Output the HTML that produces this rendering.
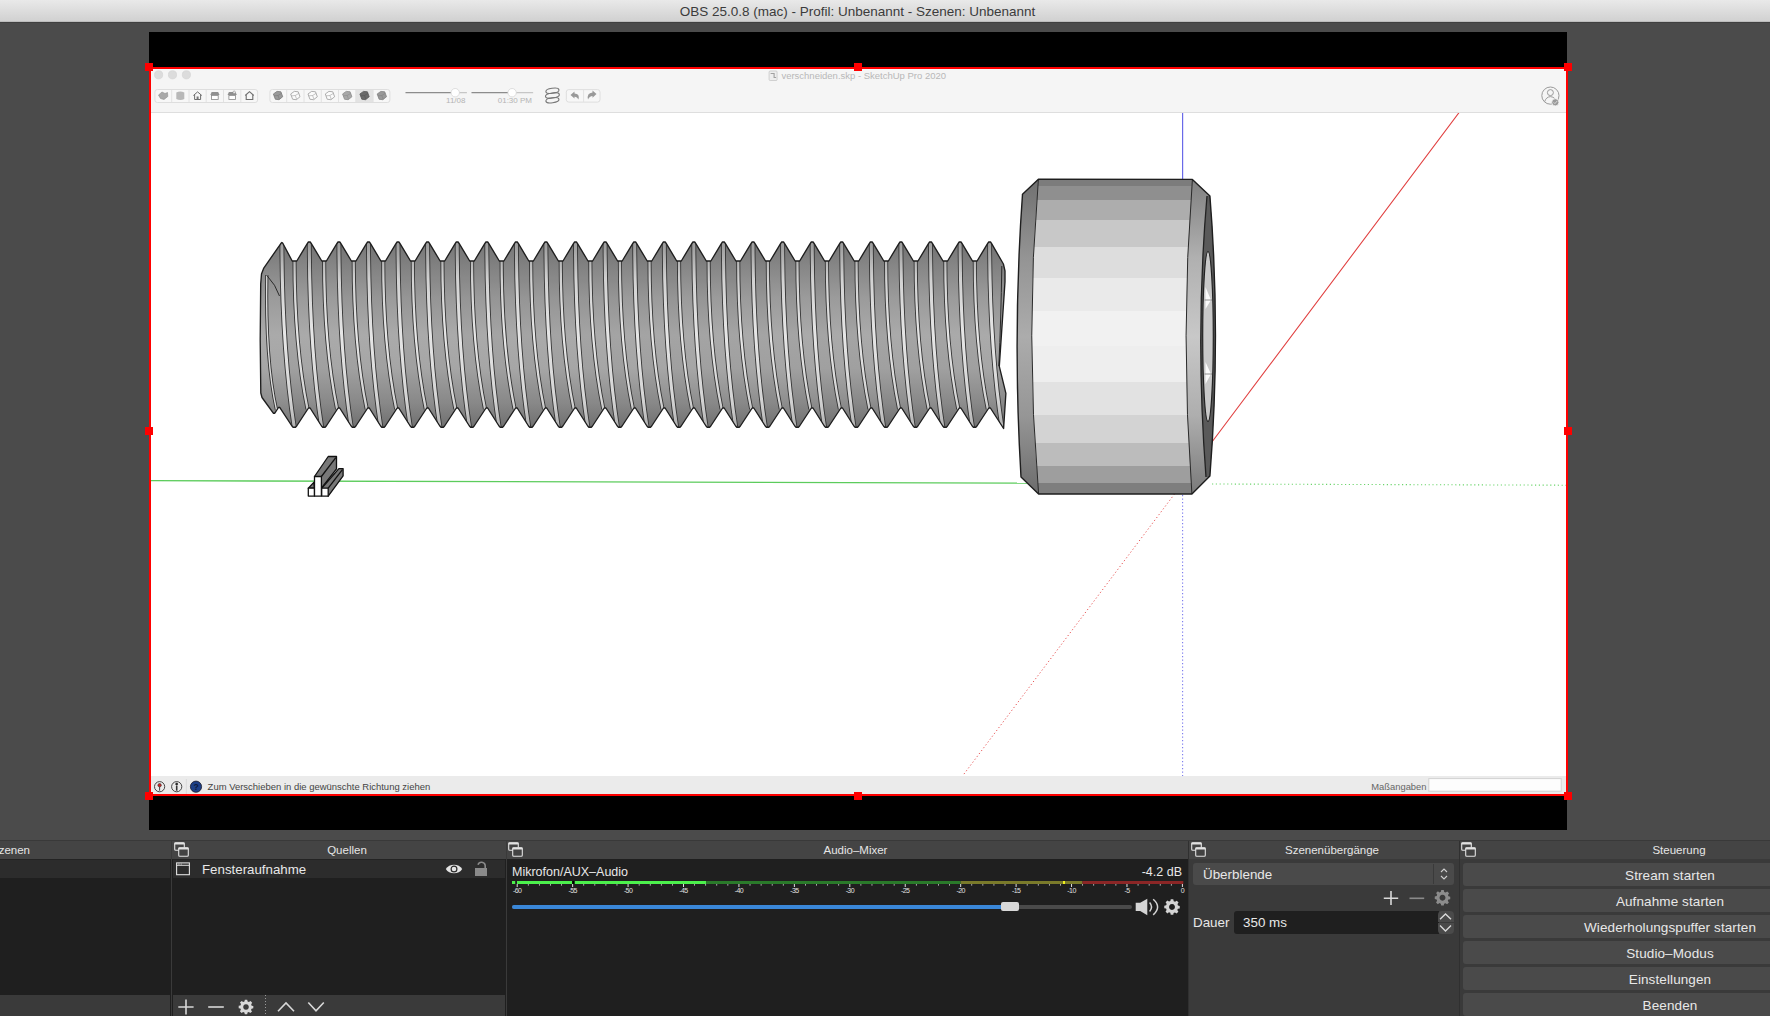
<!DOCTYPE html>
<html><head><meta charset="utf-8">
<style>
*{margin:0;padding:0;box-sizing:border-box}
html,body{width:1770px;height:1016px;overflow:hidden;background:#4b4b4b;font-family:"Liberation Sans",sans-serif}
.a{position:absolute}
#title{left:0;top:0;width:1770px;height:22px;background:linear-gradient(#e9e9e9,#d1d1d1);border-bottom:1px solid #bdbdbd}
#title span{position:absolute;left:0;width:1715px;top:3.5px;text-align:center;font-size:13.5px;color:#3b3b3b;letter-spacing:0px}
#tline{left:0;top:22px;width:1770px;height:1px;background:#404040}
#preview{left:149px;top:32px;width:1418px;height:798px;background:#000}
#su{left:151px;top:69px;width:1415px;height:725px;background:#fff;overflow:hidden}
#sutop{left:0;top:0;width:1415px;height:44px;background:#f5f5f5;border-bottom:1px solid #dedede}
#sustat{left:0;top:707px;width:1415px;height:18px;background:#ebebeb}
.red{background:#ff0000}
.h{width:8px;height:8px;background:#ff0000}
#dock{left:0;top:840px;width:1770px;height:176px;background:#1f1f1f}
.hdr{top:841px;height:18px;background:#444444;color:#e6e6e6;font-size:11.5px;text-align:center;line-height:18px}
.btn{left:1463px;width:414px;height:23px;background:#4a4a4a;border-radius:3px;color:#e8e8e8;font-size:13.5px;letter-spacing:0.1px;line-height:25px;text-align:center}
</style></head><body>
<div id="title" class="a"><span>OBS 25.0.8 (mac) - Profil: Unbenannt - Szenen: Unbenannt</span></div>
<div id="tline" class="a"></div>
<div id="preview" class="a"></div>
<div id="su" class="a">
  <div id="sutop" class="a"></div>
  <div id="sustat" class="a"></div>
</div>
<!--TB--><svg class="a" style="left:0;top:0;width:1770px;height:1016px" viewBox="0 0 1770 1016"><rect x="154.9" y="89.5" width="102.7" height="13" rx="2.5" fill="#f7f7f7" stroke="#dedede" stroke-width="1"/>
<line x1="171.7" y1="90" x2="171.7" y2="102" stroke="#e2e2e2" stroke-width="1"/>
<line x1="189.0" y1="90" x2="189.0" y2="102" stroke="#e2e2e2" stroke-width="1"/>
<line x1="206.2" y1="90" x2="206.2" y2="102" stroke="#e2e2e2" stroke-width="1"/>
<line x1="223.5" y1="90" x2="223.5" y2="102" stroke="#e2e2e2" stroke-width="1"/>
<line x1="240.8" y1="90" x2="240.8" y2="102" stroke="#e2e2e2" stroke-width="1"/>
<g transform="translate(163.0,95.5)"><path d="M-4.5,-0.5 L-1,-3.5 L2,-2 L4.5,-3 L4.8,1 L1,4 L-2.5,3 Z" fill="#a8a8a8" stroke="#8e8e8e" stroke-width="0.6"/></g>
<g transform="translate(180.3,95.5)"><path d="M-4,-3 Q0,-5 4,-3 L4,3.5 Q0,5.5 -4,3.5 Z" fill="#b8b8b8"/></g>
<g transform="translate(197.6,95.5)" fill="none" stroke="#6e6e6e" stroke-width="1"><path d="M-4.2,0 L0,-3.6 L4.2,0 M-3,-0.8 V4 H3 V-0.8"/><rect x="-1" y="1" width="2" height="3" fill="#777" stroke="none"/></g>
<g transform="translate(214.9,95.5)"><path d="M-4.6,-0.5 L-3.3,-3.4 H3.3 L4.6,-0.5 Z" fill="#909090"/><rect x="-3.3" y="0" width="6.6" height="4" fill="#fff" stroke="#888" stroke-width="0.8"/></g>
<g transform="translate(232.2,95.5)"><path d="M-4.6,-0.5 L-3.3,-3.4 H3.3 L4.6,-0.5 Z" fill="#909090"/><circle cx="2" cy="-3.3" r="1.2" fill="#fff" stroke="#888" stroke-width="0.6"/><rect x="-3.3" y="0" width="6.6" height="4" fill="#fff" stroke="#888" stroke-width="0.8"/></g>
<g transform="translate(249.5,95.5)" fill="none" stroke="#6e6e6e" stroke-width="1.1"><path d="M-4.3,0 L0,-3.8 L4.3,0 M-3.3,-0.9 V4 H3.3 V-0.9"/></g>
<rect x="269.9" y="89.5" width="120.0" height="13" rx="2.5" fill="#f7f7f7" stroke="#dedede" stroke-width="1"/>
<rect x="355.8" y="90" width="17.3" height="12" fill="#e3e3e3"/>
<line x1="286.7" y1="90" x2="286.7" y2="102" stroke="#e2e2e2" stroke-width="1"/>
<line x1="304.0" y1="90" x2="304.0" y2="102" stroke="#e2e2e2" stroke-width="1"/>
<line x1="321.3" y1="90" x2="321.3" y2="102" stroke="#e2e2e2" stroke-width="1"/>
<line x1="338.5" y1="90" x2="338.5" y2="102" stroke="#e2e2e2" stroke-width="1"/>
<line x1="355.8" y1="90" x2="355.8" y2="102" stroke="#e2e2e2" stroke-width="1"/>
<line x1="373.1" y1="90" x2="373.1" y2="102" stroke="#e2e2e2" stroke-width="1"/>
<g transform="translate(278.0,95.5) rotate(-20)"><path d="M-3.8,-3 L0.5,-4.2 L4,-2.5 L4,2.8 L-0.5,4.3 L-3.8,2.6 Z" fill="#9a9a9a" stroke="#777" stroke-width="0.7"/><path d="M-3.8,-1 L0,0 L4,-0.8 M0,0 V4" fill="none" stroke="#777" stroke-width="0.5"/></g>
<g transform="translate(295.3,95.5) rotate(-20)"><path d="M-3.8,-3 L0.5,-4.2 L4,-2.5 L4,2.8 L-0.5,4.3 L-3.8,2.6 Z" fill="#fbfbfb" stroke="#999" stroke-width="0.7"/><path d="M-3.8,-1 L0,0 L4,-0.8 M0,0 V4" fill="none" stroke="#999" stroke-width="0.5"/></g>
<g transform="translate(312.6,95.5) rotate(-20)"><path d="M-3.8,-3 L0.5,-4.2 L4,-2.5 L4,2.8 L-0.5,4.3 L-3.8,2.6 Z" fill="#fbfbfb" stroke="#999" stroke-width="0.7"/><path d="M-3.8,-1 L0,0 L4,-0.8 M0,0 V4" fill="none" stroke="#999" stroke-width="0.5"/></g>
<g transform="translate(329.9,95.5) rotate(-20)"><path d="M-3.8,-3 L0.5,-4.2 L4,-2.5 L4,2.8 L-0.5,4.3 L-3.8,2.6 Z" fill="#fbfbfb" stroke="#999" stroke-width="0.7"/><path d="M-3.8,-1 L0,0 L4,-0.8 M0,0 V4" fill="none" stroke="#999" stroke-width="0.5"/></g>
<g transform="translate(347.2,95.5) rotate(-20)"><path d="M-3.8,-3 L0.5,-4.2 L4,-2.5 L4,2.8 L-0.5,4.3 L-3.8,2.6 Z" fill="#a8a8a8" stroke="#8a8a8a" stroke-width="0.7"/><path d="M-3.8,-1 L0,0 L4,-0.8 M0,0 V4" fill="none" stroke="#8a8a8a" stroke-width="0.5"/></g>
<g transform="translate(364.5,95.5) rotate(-20)"><path d="M-3.8,-3 L0.5,-4.2 L4,-2.5 L4,2.8 L-0.5,4.3 L-3.8,2.6 Z" fill="#6a6a6a" stroke="#555" stroke-width="0.7"/><path d="M-3.8,-1 L0,0 L4,-0.8 M0,0 V4" fill="none" stroke="#555" stroke-width="0.5"/></g>
<g transform="translate(381.8,95.5) rotate(-20)"><path d="M-3.8,-3 L0.5,-4.2 L4,-2.5 L4,2.8 L-0.5,4.3 L-3.8,2.6 Z" fill="#999" stroke="#808080" stroke-width="0.7"/><path d="M-3.8,-1 L0,0 L4,-0.8 M0,0 V4" fill="none" stroke="#808080" stroke-width="0.5"/></g>
<line x1="406" y1="92.7" x2="455" y2="92.7" stroke="#8c8c8c" stroke-width="1.3" stroke-linecap="round"/>
<line x1="455" y1="92.7" x2="466.4" y2="92.7" stroke="#c6c6c6" stroke-width="1.3" stroke-linecap="round"/>
<circle cx="455.2" cy="92.7" r="4.2" fill="#fff" stroke="#d6d6d6" stroke-width="0.8"/>
<line x1="472" y1="92.7" x2="512" y2="92.7" stroke="#8c8c8c" stroke-width="1.3" stroke-linecap="round"/>
<line x1="512" y1="92.7" x2="532.6" y2="92.7" stroke="#c6c6c6" stroke-width="1.3" stroke-linecap="round"/>
<circle cx="512.1" cy="92.7" r="4.2" fill="#fff" stroke="#d6d6d6" stroke-width="0.8"/>
<text x="465.5" y="103.3" font-size="8" text-anchor="end" fill="#b4b4b4" font-family="Liberation Sans">11/08</text>
<text x="532" y="103.3" font-size="8" text-anchor="end" fill="#b4b4b4" font-family="Liberation Sans">01:30 PM</text>
<g fill="none" stroke="#777" stroke-width="1.1"><ellipse cx="552.4" cy="90.8" rx="6.6" ry="2.5" transform="rotate(-8 552.4 90.8)"/><ellipse cx="552.4" cy="95.5" rx="7" ry="2.6" transform="rotate(-8 552.4 95.5)"/><ellipse cx="552.4" cy="100.2" rx="6.6" ry="2.5" transform="rotate(-8 552.4 100.2)"/></g>
<rect x="566.3" y="89.6" width="33.7" height="12.5" rx="2.5" fill="#f7f7f7" stroke="#dedede" stroke-width="1"/>
<line x1="583.6" y1="90" x2="583.6" y2="102" stroke="#e2e2e2"/>
<path d="M570.5,95 L574.5,91.5 L574.5,93.5 Q580,93.5 578.5,99.5 Q577,96.5 574.5,96.8 L574.5,98.6 Z" fill="#999"/>
<path d="M596.5,94 L592.5,90.5 L592.5,92.5 Q586.5,93 588,99.5 Q589.5,96 592.5,96 L592.5,97.8 Z" fill="#999"/>
<circle cx="158.6" cy="74.8" r="4.1" fill="#dcdcdc" stroke="#d2d2d2" stroke-width="0.6"/>
<circle cx="172.5" cy="74.8" r="4.1" fill="#dcdcdc" stroke="#d2d2d2" stroke-width="0.6"/>
<circle cx="186.4" cy="74.8" r="4.1" fill="#dcdcdc" stroke="#d2d2d2" stroke-width="0.6"/>
<g transform="translate(768.6,70.5)"><rect x="0.5" y="0.5" width="8" height="9.5" rx="1" fill="#eee" stroke="#c8c8c8" stroke-width="0.8"/><path d="M2,3 L5.5,3 L5.5,7 L7.5,7" fill="none" stroke="#a0a0a0" stroke-width="1.1"/></g>
<text x="781.4" y="78.6" font-size="9.6" fill="#b8b8b8" font-family="Liberation Sans" textLength="164.7" lengthAdjust="spacingAndGlyphs">verschneiden.skp - SketchUp Pro 2020</text>
<g fill="none" stroke="#9a9a9a" stroke-width="1"><circle cx="1550.4" cy="95.6" r="8.6"/><circle cx="1550.4" cy="92.6" r="3"/><path d="M1544.6,101.8 Q1546,97 1550.4,96.6 Q1553.2,96.8 1554.8,98.6"/></g>
<circle cx="1555.3" cy="102.3" r="3.6" fill="#9a9a9a" stroke="#f5f5f5" stroke-width="0.8"/>
<path d="M1553.6,102.3 L1554.9,103.6 L1557.2,101" fill="none" stroke="#e8e8e8" stroke-width="0.8"/>
<g transform="translate(159.6,786.7)" fill="none" stroke="#333" stroke-width="0.9"><circle r="5.1"/><circle cy="-1.5" r="1.7" fill="#c22" stroke="#333" stroke-width="0.6"/><line x1="0" y1="0.3" x2="0" y2="4"/></g>
<g transform="translate(176.7,786.7)" fill="none" stroke="#333" stroke-width="0.9"><circle r="5.1"/><circle cy="-2.6" r="1" fill="#111"/><path d="M0,-1 V4" stroke-width="1.6"/></g>
<line x1="186.3" y1="779" x2="186.3" y2="794" stroke="#dadada"/>
<circle cx="196" cy="786.7" r="5.6" fill="#1d3f86" stroke="#1a1a2a" stroke-width="0.8"/>
<text x="196" y="790.2" font-size="8.6" font-weight="bold" text-anchor="middle" fill="#0d1a3a" font-family="Liberation Sans">?</text>
<text x="207.6" y="789.6" font-size="9.4" fill="#444" font-family="Liberation Sans" textLength="222.6" lengthAdjust="spacingAndGlyphs">Zum Verschieben in die gewünschte Richtung ziehen</text>
<text x="1426.5" y="789.6" font-size="9.4" text-anchor="end" fill="#666" font-family="Liberation Sans">Maßangaben</text>
<rect x="1428.8" y="778.6" width="132.4" height="12.6" fill="#fdfdfd" stroke="#d2d2d2" stroke-width="1"/></svg><!--/TB-->
<!--VP--><svg class="a" style="left:0;top:0;width:1770px;height:1016px" viewBox="0 0 1770 1016">
<defs><clipPath id="vp"><rect x="151" y="113" width="1415" height="663"/></clipPath></defs>
<g clip-path="url(#vp)">

<line x1="151" y1="480.7" x2="1027" y2="483.1" stroke="#5ccc5c" stroke-width="1.3"/>
<line x1="1212" y1="484" x2="1566" y2="485.2" stroke="#6cd46c" stroke-width="1.1" stroke-dasharray="1.2,2.6"/>
<line x1="1182.6" y1="113" x2="1182.6" y2="180" stroke="#6a6ae8" stroke-width="1.2"/>
<line x1="1182.6" y1="495" x2="1182.6" y2="776" stroke="#7a7aee" stroke-width="1.1" stroke-dasharray="1.2,2.3"/>
<line x1="1459.3" y1="112.2" x2="1212.5" y2="441.3" stroke="#e03c3c" stroke-width="1.05"/>
<line x1="1174.5" y1="494" x2="961" y2="778" stroke="#e85050" stroke-width="1" stroke-dasharray="1.2,2.4"/>

<defs>
<linearGradient id="tg" x1="0" y1="242" x2="0" y2="428" gradientUnits="userSpaceOnUse"><stop offset="0" stop-color="#767676"/><stop offset="0.12" stop-color="#858585"/><stop offset="0.3" stop-color="#9b9b9b"/><stop offset="0.5" stop-color="#aaaaaa"/><stop offset="0.68" stop-color="#a6a6a6"/><stop offset="0.85" stop-color="#909090"/><stop offset="1" stop-color="#747474"/></linearGradient>
<linearGradient id="bg" x1="0" y1="242" x2="0" y2="428" gradientUnits="userSpaceOnUse"><stop offset="0" stop-color="#9a9a9a"/><stop offset="0.1" stop-color="#b4b4b4"/><stop offset="0.2" stop-color="#d2d2d2"/><stop offset="0.5" stop-color="#e6e6e6"/><stop offset="0.85" stop-color="#d4d4d4"/><stop offset="1" stop-color="#b0b0b0"/></linearGradient>
<clipPath id="tc"><path d="M260.7,284.0 L261.5,274.0 L263.6,268.4 L281.0,243.3 L281.9,242.5 L282.8,243.3 L292.2,261.0 L296.8,261.0 L307.4,243.4 L308.4,242.0 L310.2,242.0 L311.2,243.4 L321.8,261.0 L326.4,261.0 L337.0,243.4 L338.0,242.0 L339.8,242.0 L340.8,243.4 L351.4,261.0 L356.0,261.0 L366.6,243.4 L367.6,242.0 L369.4,242.0 L370.4,243.4 L380.9,261.0 L385.5,261.0 L396.1,243.4 L397.1,242.0 L398.9,242.0 L399.9,243.4 L410.5,261.0 L415.1,261.0 L425.7,243.4 L426.7,242.0 L428.5,242.0 L429.5,243.4 L440.1,261.0 L444.7,261.0 L455.3,243.4 L456.3,242.0 L458.1,242.0 L459.1,243.4 L469.7,261.0 L474.3,261.0 L484.9,243.4 L485.9,242.0 L487.7,242.0 L488.7,243.4 L499.3,261.0 L503.9,261.0 L514.5,243.4 L515.5,242.0 L517.3,242.0 L518.3,243.4 L528.8,261.0 L533.4,261.0 L544.0,243.4 L545.0,242.0 L546.8,242.0 L547.8,243.4 L558.4,261.0 L563.0,261.0 L573.6,243.4 L574.6,242.0 L576.4,242.0 L577.4,243.4 L588.0,261.0 L592.6,261.0 L603.2,243.4 L604.2,242.0 L606.0,242.0 L607.0,243.4 L617.6,261.0 L622.2,261.0 L632.8,243.4 L633.8,242.0 L635.6,242.0 L636.6,243.4 L647.2,261.0 L651.8,261.0 L662.4,243.4 L663.4,242.0 L665.2,242.0 L666.2,243.4 L676.7,261.0 L681.3,261.0 L691.9,243.4 L692.9,242.0 L694.7,242.0 L695.7,243.4 L706.3,261.0 L710.9,261.0 L721.5,243.4 L722.5,242.0 L724.3,242.0 L725.3,243.4 L735.9,261.0 L740.5,261.0 L751.1,243.4 L752.1,242.0 L753.9,242.0 L754.9,243.4 L765.5,261.0 L770.1,261.0 L780.7,243.4 L781.7,242.0 L783.5,242.0 L784.5,243.4 L795.1,261.0 L799.7,261.0 L810.3,243.4 L811.3,242.0 L813.1,242.0 L814.1,243.4 L824.6,261.0 L829.2,261.0 L839.8,243.4 L840.8,242.0 L842.6,242.0 L843.6,243.4 L854.2,261.0 L858.8,261.0 L869.4,243.4 L870.4,242.0 L872.2,242.0 L873.2,243.4 L883.8,261.0 L888.4,261.0 L899.0,243.4 L900.0,242.0 L901.8,242.0 L902.8,243.4 L913.4,261.0 L918.0,261.0 L928.6,243.4 L929.6,242.0 L931.4,242.0 L932.4,243.4 L943.0,261.0 L947.6,261.0 L958.2,243.4 L959.2,242.0 L961.0,242.0 L962.0,243.4 L972.5,261.0 L977.1,261.0 L987.7,243.4 L988.7,242.0 L990.5,242.0 L991.5,243.4 L1003.4,264.0 L1005.0,271.0 L1005.0,281.7 L999.3,366.4 L1005.9,393.3 L1003.6,428.5 L990.4,408.0 L988.8,408.0 L977.0,426.0 L975.8,427.2 L973.4,427.2 L972.2,426.0 L960.9,408.0 L959.3,408.0 L947.5,426.0 L946.3,427.2 L943.9,427.2 L942.7,426.0 L931.3,408.0 L929.7,408.0 L917.9,426.0 L916.7,427.2 L914.3,427.2 L913.1,426.0 L901.7,408.0 L900.1,408.0 L888.3,426.0 L887.1,427.2 L884.7,427.2 L883.5,426.0 L872.1,408.0 L870.5,408.0 L858.7,426.0 L857.5,427.2 L855.1,427.2 L853.9,426.0 L842.5,408.0 L840.9,408.0 L829.1,426.0 L827.9,427.2 L825.5,427.2 L824.3,426.0 L813.0,408.0 L811.4,408.0 L799.6,426.0 L798.4,427.2 L796.0,427.2 L794.8,426.0 L783.4,408.0 L781.8,408.0 L770.0,426.0 L768.8,427.2 L766.4,427.2 L765.2,426.0 L753.8,408.0 L752.2,408.0 L740.4,426.0 L739.2,427.2 L736.8,427.2 L735.6,426.0 L724.2,408.0 L722.6,408.0 L710.8,426.0 L709.6,427.2 L707.2,427.2 L706.0,426.0 L694.6,408.0 L693.0,408.0 L681.2,426.0 L680.0,427.2 L677.6,427.2 L676.4,426.0 L665.1,408.0 L663.5,408.0 L651.7,426.0 L650.5,427.2 L648.1,427.2 L646.9,426.0 L635.5,408.0 L633.9,408.0 L622.1,426.0 L620.9,427.2 L618.5,427.2 L617.3,426.0 L605.9,408.0 L604.3,408.0 L592.5,426.0 L591.3,427.2 L588.9,427.2 L587.7,426.0 L576.3,408.0 L574.7,408.0 L562.9,426.0 L561.7,427.2 L559.3,427.2 L558.1,426.0 L546.7,408.0 L545.1,408.0 L533.3,426.0 L532.1,427.2 L529.7,427.2 L528.5,426.0 L517.2,408.0 L515.6,408.0 L503.8,426.0 L502.6,427.2 L500.2,427.2 L499.0,426.0 L487.6,408.0 L486.0,408.0 L474.2,426.0 L473.0,427.2 L470.6,427.2 L469.4,426.0 L458.0,408.0 L456.4,408.0 L444.6,426.0 L443.4,427.2 L441.0,427.2 L439.8,426.0 L428.4,408.0 L426.8,408.0 L415.0,426.0 L413.8,427.2 L411.4,427.2 L410.2,426.0 L398.8,408.0 L397.2,408.0 L385.4,426.0 L384.2,427.2 L381.8,427.2 L380.6,426.0 L369.3,408.0 L367.7,408.0 L355.9,426.0 L354.7,427.2 L352.3,427.2 L351.1,426.0 L339.7,408.0 L338.1,408.0 L326.3,426.0 L325.1,427.2 L322.7,427.2 L321.5,426.0 L310.1,408.0 L308.5,408.0 L296.7,426.0 L295.5,427.2 L293.1,427.2 L291.9,426.0 L279.7,407.3 L278.5,407.5 L274.8,413.2 L273.3,413.2 L262.0,397.5 L260.8,393.0 L260.2,340.0 Z"/></clipPath>
</defs>
<path d="M260.7,284.0 L261.5,274.0 L263.6,268.4 L281.0,243.3 L281.9,242.5 L282.8,243.3 L292.2,261.0 L296.8,261.0 L307.4,243.4 L308.4,242.0 L310.2,242.0 L311.2,243.4 L321.8,261.0 L326.4,261.0 L337.0,243.4 L338.0,242.0 L339.8,242.0 L340.8,243.4 L351.4,261.0 L356.0,261.0 L366.6,243.4 L367.6,242.0 L369.4,242.0 L370.4,243.4 L380.9,261.0 L385.5,261.0 L396.1,243.4 L397.1,242.0 L398.9,242.0 L399.9,243.4 L410.5,261.0 L415.1,261.0 L425.7,243.4 L426.7,242.0 L428.5,242.0 L429.5,243.4 L440.1,261.0 L444.7,261.0 L455.3,243.4 L456.3,242.0 L458.1,242.0 L459.1,243.4 L469.7,261.0 L474.3,261.0 L484.9,243.4 L485.9,242.0 L487.7,242.0 L488.7,243.4 L499.3,261.0 L503.9,261.0 L514.5,243.4 L515.5,242.0 L517.3,242.0 L518.3,243.4 L528.8,261.0 L533.4,261.0 L544.0,243.4 L545.0,242.0 L546.8,242.0 L547.8,243.4 L558.4,261.0 L563.0,261.0 L573.6,243.4 L574.6,242.0 L576.4,242.0 L577.4,243.4 L588.0,261.0 L592.6,261.0 L603.2,243.4 L604.2,242.0 L606.0,242.0 L607.0,243.4 L617.6,261.0 L622.2,261.0 L632.8,243.4 L633.8,242.0 L635.6,242.0 L636.6,243.4 L647.2,261.0 L651.8,261.0 L662.4,243.4 L663.4,242.0 L665.2,242.0 L666.2,243.4 L676.7,261.0 L681.3,261.0 L691.9,243.4 L692.9,242.0 L694.7,242.0 L695.7,243.4 L706.3,261.0 L710.9,261.0 L721.5,243.4 L722.5,242.0 L724.3,242.0 L725.3,243.4 L735.9,261.0 L740.5,261.0 L751.1,243.4 L752.1,242.0 L753.9,242.0 L754.9,243.4 L765.5,261.0 L770.1,261.0 L780.7,243.4 L781.7,242.0 L783.5,242.0 L784.5,243.4 L795.1,261.0 L799.7,261.0 L810.3,243.4 L811.3,242.0 L813.1,242.0 L814.1,243.4 L824.6,261.0 L829.2,261.0 L839.8,243.4 L840.8,242.0 L842.6,242.0 L843.6,243.4 L854.2,261.0 L858.8,261.0 L869.4,243.4 L870.4,242.0 L872.2,242.0 L873.2,243.4 L883.8,261.0 L888.4,261.0 L899.0,243.4 L900.0,242.0 L901.8,242.0 L902.8,243.4 L913.4,261.0 L918.0,261.0 L928.6,243.4 L929.6,242.0 L931.4,242.0 L932.4,243.4 L943.0,261.0 L947.6,261.0 L958.2,243.4 L959.2,242.0 L961.0,242.0 L962.0,243.4 L972.5,261.0 L977.1,261.0 L987.7,243.4 L988.7,242.0 L990.5,242.0 L991.5,243.4 L1003.4,264.0 L1005.0,271.0 L1005.0,281.7 L999.3,366.4 L1005.9,393.3 L1003.6,428.5 L990.4,408.0 L988.8,408.0 L977.0,426.0 L975.8,427.2 L973.4,427.2 L972.2,426.0 L960.9,408.0 L959.3,408.0 L947.5,426.0 L946.3,427.2 L943.9,427.2 L942.7,426.0 L931.3,408.0 L929.7,408.0 L917.9,426.0 L916.7,427.2 L914.3,427.2 L913.1,426.0 L901.7,408.0 L900.1,408.0 L888.3,426.0 L887.1,427.2 L884.7,427.2 L883.5,426.0 L872.1,408.0 L870.5,408.0 L858.7,426.0 L857.5,427.2 L855.1,427.2 L853.9,426.0 L842.5,408.0 L840.9,408.0 L829.1,426.0 L827.9,427.2 L825.5,427.2 L824.3,426.0 L813.0,408.0 L811.4,408.0 L799.6,426.0 L798.4,427.2 L796.0,427.2 L794.8,426.0 L783.4,408.0 L781.8,408.0 L770.0,426.0 L768.8,427.2 L766.4,427.2 L765.2,426.0 L753.8,408.0 L752.2,408.0 L740.4,426.0 L739.2,427.2 L736.8,427.2 L735.6,426.0 L724.2,408.0 L722.6,408.0 L710.8,426.0 L709.6,427.2 L707.2,427.2 L706.0,426.0 L694.6,408.0 L693.0,408.0 L681.2,426.0 L680.0,427.2 L677.6,427.2 L676.4,426.0 L665.1,408.0 L663.5,408.0 L651.7,426.0 L650.5,427.2 L648.1,427.2 L646.9,426.0 L635.5,408.0 L633.9,408.0 L622.1,426.0 L620.9,427.2 L618.5,427.2 L617.3,426.0 L605.9,408.0 L604.3,408.0 L592.5,426.0 L591.3,427.2 L588.9,427.2 L587.7,426.0 L576.3,408.0 L574.7,408.0 L562.9,426.0 L561.7,427.2 L559.3,427.2 L558.1,426.0 L546.7,408.0 L545.1,408.0 L533.3,426.0 L532.1,427.2 L529.7,427.2 L528.5,426.0 L517.2,408.0 L515.6,408.0 L503.8,426.0 L502.6,427.2 L500.2,427.2 L499.0,426.0 L487.6,408.0 L486.0,408.0 L474.2,426.0 L473.0,427.2 L470.6,427.2 L469.4,426.0 L458.0,408.0 L456.4,408.0 L444.6,426.0 L443.4,427.2 L441.0,427.2 L439.8,426.0 L428.4,408.0 L426.8,408.0 L415.0,426.0 L413.8,427.2 L411.4,427.2 L410.2,426.0 L398.8,408.0 L397.2,408.0 L385.4,426.0 L384.2,427.2 L381.8,427.2 L380.6,426.0 L369.3,408.0 L367.7,408.0 L355.9,426.0 L354.7,427.2 L352.3,427.2 L351.1,426.0 L339.7,408.0 L338.1,408.0 L326.3,426.0 L325.1,427.2 L322.7,427.2 L321.5,426.0 L310.1,408.0 L308.5,408.0 L296.7,426.0 L295.5,427.2 L293.1,427.2 L291.9,426.0 L279.7,407.3 L278.5,407.5 L274.8,413.2 L273.3,413.2 L262.0,397.5 L260.8,393.0 L260.2,340.0 Z" fill="url(#tg)"/>
<g clip-path="url(#tc)">
<path d="M279.7,238 Q279.7,334 294.3,430 L309.3,430 Q294.5,334 294.5,238 Z" fill="#000" fill-opacity="0.035"/>
<path d="M309.3,238 Q309.3,334 323.9,430 L338.9,430 Q324.1,334 324.1,238 Z" fill="#000" fill-opacity="0.035"/>
<path d="M338.9,238 Q338.9,334 353.5,430 L368.5,430 Q353.7,334 353.7,238 Z" fill="#000" fill-opacity="0.035"/>
<path d="M368.5,238 Q368.5,334 383.1,430 L398.0,430 Q383.2,334 383.2,238 Z" fill="#000" fill-opacity="0.035"/>
<path d="M398.0,238 Q398.0,334 412.6,430 L427.6,430 Q412.8,334 412.8,238 Z" fill="#000" fill-opacity="0.035"/>
<path d="M427.6,238 Q427.6,334 442.2,430 L457.2,430 Q442.4,334 442.4,238 Z" fill="#000" fill-opacity="0.035"/>
<path d="M457.2,238 Q457.2,334 471.8,430 L486.8,430 Q472.0,334 472.0,238 Z" fill="#000" fill-opacity="0.035"/>
<path d="M486.8,238 Q486.8,334 501.4,430 L516.4,430 Q501.6,334 501.6,238 Z" fill="#000" fill-opacity="0.035"/>
<path d="M516.4,238 Q516.4,334 531.0,430 L545.9,430 Q531.1,334 531.1,238 Z" fill="#000" fill-opacity="0.035"/>
<path d="M545.9,238 Q545.9,334 560.5,430 L575.5,430 Q560.7,334 560.7,238 Z" fill="#000" fill-opacity="0.035"/>
<path d="M575.5,238 Q575.5,334 590.1,430 L605.1,430 Q590.3,334 590.3,238 Z" fill="#000" fill-opacity="0.035"/>
<path d="M605.1,238 Q605.1,334 619.7,430 L634.7,430 Q619.9,334 619.9,238 Z" fill="#000" fill-opacity="0.035"/>
<path d="M634.7,238 Q634.7,334 649.3,430 L664.3,430 Q649.5,334 649.5,238 Z" fill="#000" fill-opacity="0.035"/>
<path d="M664.3,238 Q664.3,334 678.9,430 L693.8,430 Q679.0,334 679.0,238 Z" fill="#000" fill-opacity="0.035"/>
<path d="M693.8,238 Q693.8,334 708.4,430 L723.4,430 Q708.6,334 708.6,238 Z" fill="#000" fill-opacity="0.035"/>
<path d="M723.4,238 Q723.4,334 738.0,430 L753.0,430 Q738.2,334 738.2,238 Z" fill="#000" fill-opacity="0.035"/>
<path d="M753.0,238 Q753.0,334 767.6,430 L782.6,430 Q767.8,334 767.8,238 Z" fill="#000" fill-opacity="0.035"/>
<path d="M782.6,238 Q782.6,334 797.2,430 L812.2,430 Q797.4,334 797.4,238 Z" fill="#000" fill-opacity="0.035"/>
<path d="M812.2,238 Q812.2,334 826.8,430 L841.7,430 Q826.9,334 826.9,238 Z" fill="#000" fill-opacity="0.035"/>
<path d="M841.7,238 Q841.7,334 856.3,430 L871.3,430 Q856.5,334 856.5,238 Z" fill="#000" fill-opacity="0.035"/>
<path d="M871.3,238 Q871.3,334 885.9,430 L900.9,430 Q886.1,334 886.1,238 Z" fill="#000" fill-opacity="0.035"/>
<path d="M900.9,238 Q900.9,334 915.5,430 L930.5,430 Q915.7,334 915.7,238 Z" fill="#000" fill-opacity="0.035"/>
<path d="M930.5,238 Q930.5,334 945.1,430 L960.1,430 Q945.3,334 945.3,238 Z" fill="#000" fill-opacity="0.035"/>
<path d="M960.1,238 Q960.1,334 974.7,430 L989.6,430 Q974.8,334 974.8,238 Z" fill="#000" fill-opacity="0.035"/>
<path d="M989.6,238 Q989.6,334 1004.2,430 L1019.2,430 Q1004.4,334 1004.4,238 Z" fill="#000" fill-opacity="0.035"/>
<path d="M281.9,240 C281.9,303 284.3,364 294.5,429" fill="none" stroke="#353535" stroke-width="4.9"/>
<path d="M281.9,240 C281.9,303 284.3,364 294.5,429" fill="none" stroke="url(#bg)" stroke-width="3.1"/>
<path d="M309.3,240 C309.3,303 311.7,364 321.9,429" fill="none" stroke="#353535" stroke-width="4.9"/>
<path d="M309.3,240 C309.3,303 311.7,364 321.9,429" fill="none" stroke="url(#bg)" stroke-width="3.1"/>
<path d="M338.9,240 C338.9,303 341.3,364 351.5,429" fill="none" stroke="#353535" stroke-width="4.9"/>
<path d="M338.9,240 C338.9,303 341.3,364 351.5,429" fill="none" stroke="url(#bg)" stroke-width="3.1"/>
<path d="M368.5,240 C368.5,303 370.9,364 381.1,429" fill="none" stroke="#353535" stroke-width="4.9"/>
<path d="M368.5,240 C368.5,303 370.9,364 381.1,429" fill="none" stroke="url(#bg)" stroke-width="3.1"/>
<path d="M398.0,240 C398.0,303 400.4,364 410.6,429" fill="none" stroke="#353535" stroke-width="4.9"/>
<path d="M398.0,240 C398.0,303 400.4,364 410.6,429" fill="none" stroke="url(#bg)" stroke-width="3.1"/>
<path d="M427.6,240 C427.6,303 430.0,364 440.2,429" fill="none" stroke="#353535" stroke-width="4.9"/>
<path d="M427.6,240 C427.6,303 430.0,364 440.2,429" fill="none" stroke="url(#bg)" stroke-width="3.1"/>
<path d="M457.2,240 C457.2,303 459.6,364 469.8,429" fill="none" stroke="#353535" stroke-width="4.9"/>
<path d="M457.2,240 C457.2,303 459.6,364 469.8,429" fill="none" stroke="url(#bg)" stroke-width="3.1"/>
<path d="M486.8,240 C486.8,303 489.2,364 499.4,429" fill="none" stroke="#353535" stroke-width="4.9"/>
<path d="M486.8,240 C486.8,303 489.2,364 499.4,429" fill="none" stroke="url(#bg)" stroke-width="3.1"/>
<path d="M516.4,240 C516.4,303 518.8,364 529.0,429" fill="none" stroke="#353535" stroke-width="4.9"/>
<path d="M516.4,240 C516.4,303 518.8,364 529.0,429" fill="none" stroke="url(#bg)" stroke-width="3.1"/>
<path d="M545.9,240 C545.9,303 548.3,364 558.5,429" fill="none" stroke="#353535" stroke-width="4.9"/>
<path d="M545.9,240 C545.9,303 548.3,364 558.5,429" fill="none" stroke="url(#bg)" stroke-width="3.1"/>
<path d="M575.5,240 C575.5,303 577.9,364 588.1,429" fill="none" stroke="#353535" stroke-width="4.9"/>
<path d="M575.5,240 C575.5,303 577.9,364 588.1,429" fill="none" stroke="url(#bg)" stroke-width="3.1"/>
<path d="M605.1,240 C605.1,303 607.5,364 617.7,429" fill="none" stroke="#353535" stroke-width="4.9"/>
<path d="M605.1,240 C605.1,303 607.5,364 617.7,429" fill="none" stroke="url(#bg)" stroke-width="3.1"/>
<path d="M634.7,240 C634.7,303 637.1,364 647.3,429" fill="none" stroke="#353535" stroke-width="4.9"/>
<path d="M634.7,240 C634.7,303 637.1,364 647.3,429" fill="none" stroke="url(#bg)" stroke-width="3.1"/>
<path d="M664.3,240 C664.3,303 666.7,364 676.9,429" fill="none" stroke="#353535" stroke-width="4.9"/>
<path d="M664.3,240 C664.3,303 666.7,364 676.9,429" fill="none" stroke="url(#bg)" stroke-width="3.1"/>
<path d="M693.8,240 C693.8,303 696.2,364 706.4,429" fill="none" stroke="#353535" stroke-width="4.9"/>
<path d="M693.8,240 C693.8,303 696.2,364 706.4,429" fill="none" stroke="url(#bg)" stroke-width="3.1"/>
<path d="M723.4,240 C723.4,303 725.8,364 736.0,429" fill="none" stroke="#353535" stroke-width="4.9"/>
<path d="M723.4,240 C723.4,303 725.8,364 736.0,429" fill="none" stroke="url(#bg)" stroke-width="3.1"/>
<path d="M753.0,240 C753.0,303 755.4,364 765.6,429" fill="none" stroke="#353535" stroke-width="4.9"/>
<path d="M753.0,240 C753.0,303 755.4,364 765.6,429" fill="none" stroke="url(#bg)" stroke-width="3.1"/>
<path d="M782.6,240 C782.6,303 785.0,364 795.2,429" fill="none" stroke="#353535" stroke-width="4.9"/>
<path d="M782.6,240 C782.6,303 785.0,364 795.2,429" fill="none" stroke="url(#bg)" stroke-width="3.1"/>
<path d="M812.2,240 C812.2,303 814.6,364 824.8,429" fill="none" stroke="#353535" stroke-width="4.9"/>
<path d="M812.2,240 C812.2,303 814.6,364 824.8,429" fill="none" stroke="url(#bg)" stroke-width="3.1"/>
<path d="M841.7,240 C841.7,303 844.1,364 854.3,429" fill="none" stroke="#353535" stroke-width="4.9"/>
<path d="M841.7,240 C841.7,303 844.1,364 854.3,429" fill="none" stroke="url(#bg)" stroke-width="3.1"/>
<path d="M871.3,240 C871.3,303 873.7,364 883.9,429" fill="none" stroke="#353535" stroke-width="4.9"/>
<path d="M871.3,240 C871.3,303 873.7,364 883.9,429" fill="none" stroke="url(#bg)" stroke-width="3.1"/>
<path d="M900.9,240 C900.9,303 903.3,364 913.5,429" fill="none" stroke="#353535" stroke-width="4.9"/>
<path d="M900.9,240 C900.9,303 903.3,364 913.5,429" fill="none" stroke="url(#bg)" stroke-width="3.1"/>
<path d="M930.5,240 C930.5,303 932.9,364 943.1,429" fill="none" stroke="#353535" stroke-width="4.9"/>
<path d="M930.5,240 C930.5,303 932.9,364 943.1,429" fill="none" stroke="url(#bg)" stroke-width="3.1"/>
<path d="M960.1,240 C960.1,303 962.5,364 972.7,429" fill="none" stroke="#353535" stroke-width="4.9"/>
<path d="M960.1,240 C960.1,303 962.5,364 972.7,429" fill="none" stroke="url(#bg)" stroke-width="3.1"/>
<path d="M989.6,240 C989.6,303 992.0,364 1002.2,429" fill="none" stroke="#353535" stroke-width="4.9"/>
<path d="M989.6,240 C989.6,303 992.0,364 1002.2,429" fill="none" stroke="url(#bg)" stroke-width="3.1"/>
<path d="M294.5,259 C294.5,309 297.1,359 307.5,409" fill="none" stroke="#353535" stroke-width="4.1"/>
<path d="M294.5,259 C294.5,309 297.1,359 307.5,409" fill="none" stroke="url(#bg)" stroke-width="2.3"/>
<path d="M324.1,259 C324.1,309 326.7,359 337.1,409" fill="none" stroke="#353535" stroke-width="4.1"/>
<path d="M324.1,259 C324.1,309 326.7,359 337.1,409" fill="none" stroke="url(#bg)" stroke-width="2.3"/>
<path d="M353.7,259 C353.7,309 356.3,359 366.7,409" fill="none" stroke="#353535" stroke-width="4.1"/>
<path d="M353.7,259 C353.7,309 356.3,359 366.7,409" fill="none" stroke="url(#bg)" stroke-width="2.3"/>
<path d="M383.2,259 C383.2,309 385.8,359 396.2,409" fill="none" stroke="#353535" stroke-width="4.1"/>
<path d="M383.2,259 C383.2,309 385.8,359 396.2,409" fill="none" stroke="url(#bg)" stroke-width="2.3"/>
<path d="M412.8,259 C412.8,309 415.4,359 425.8,409" fill="none" stroke="#353535" stroke-width="4.1"/>
<path d="M412.8,259 C412.8,309 415.4,359 425.8,409" fill="none" stroke="url(#bg)" stroke-width="2.3"/>
<path d="M442.4,259 C442.4,309 445.0,359 455.4,409" fill="none" stroke="#353535" stroke-width="4.1"/>
<path d="M442.4,259 C442.4,309 445.0,359 455.4,409" fill="none" stroke="url(#bg)" stroke-width="2.3"/>
<path d="M472.0,259 C472.0,309 474.6,359 485.0,409" fill="none" stroke="#353535" stroke-width="4.1"/>
<path d="M472.0,259 C472.0,309 474.6,359 485.0,409" fill="none" stroke="url(#bg)" stroke-width="2.3"/>
<path d="M501.6,259 C501.6,309 504.2,359 514.6,409" fill="none" stroke="#353535" stroke-width="4.1"/>
<path d="M501.6,259 C501.6,309 504.2,359 514.6,409" fill="none" stroke="url(#bg)" stroke-width="2.3"/>
<path d="M531.1,259 C531.1,309 533.7,359 544.1,409" fill="none" stroke="#353535" stroke-width="4.1"/>
<path d="M531.1,259 C531.1,309 533.7,359 544.1,409" fill="none" stroke="url(#bg)" stroke-width="2.3"/>
<path d="M560.7,259 C560.7,309 563.3,359 573.7,409" fill="none" stroke="#353535" stroke-width="4.1"/>
<path d="M560.7,259 C560.7,309 563.3,359 573.7,409" fill="none" stroke="url(#bg)" stroke-width="2.3"/>
<path d="M590.3,259 C590.3,309 592.9,359 603.3,409" fill="none" stroke="#353535" stroke-width="4.1"/>
<path d="M590.3,259 C590.3,309 592.9,359 603.3,409" fill="none" stroke="url(#bg)" stroke-width="2.3"/>
<path d="M619.9,259 C619.9,309 622.5,359 632.9,409" fill="none" stroke="#353535" stroke-width="4.1"/>
<path d="M619.9,259 C619.9,309 622.5,359 632.9,409" fill="none" stroke="url(#bg)" stroke-width="2.3"/>
<path d="M649.5,259 C649.5,309 652.1,359 662.5,409" fill="none" stroke="#353535" stroke-width="4.1"/>
<path d="M649.5,259 C649.5,309 652.1,359 662.5,409" fill="none" stroke="url(#bg)" stroke-width="2.3"/>
<path d="M679.0,259 C679.0,309 681.6,359 692.0,409" fill="none" stroke="#353535" stroke-width="4.1"/>
<path d="M679.0,259 C679.0,309 681.6,359 692.0,409" fill="none" stroke="url(#bg)" stroke-width="2.3"/>
<path d="M708.6,259 C708.6,309 711.2,359 721.6,409" fill="none" stroke="#353535" stroke-width="4.1"/>
<path d="M708.6,259 C708.6,309 711.2,359 721.6,409" fill="none" stroke="url(#bg)" stroke-width="2.3"/>
<path d="M738.2,259 C738.2,309 740.8,359 751.2,409" fill="none" stroke="#353535" stroke-width="4.1"/>
<path d="M738.2,259 C738.2,309 740.8,359 751.2,409" fill="none" stroke="url(#bg)" stroke-width="2.3"/>
<path d="M767.8,259 C767.8,309 770.4,359 780.8,409" fill="none" stroke="#353535" stroke-width="4.1"/>
<path d="M767.8,259 C767.8,309 770.4,359 780.8,409" fill="none" stroke="url(#bg)" stroke-width="2.3"/>
<path d="M797.4,259 C797.4,309 800.0,359 810.4,409" fill="none" stroke="#353535" stroke-width="4.1"/>
<path d="M797.4,259 C797.4,309 800.0,359 810.4,409" fill="none" stroke="url(#bg)" stroke-width="2.3"/>
<path d="M826.9,259 C826.9,309 829.5,359 839.9,409" fill="none" stroke="#353535" stroke-width="4.1"/>
<path d="M826.9,259 C826.9,309 829.5,359 839.9,409" fill="none" stroke="url(#bg)" stroke-width="2.3"/>
<path d="M856.5,259 C856.5,309 859.1,359 869.5,409" fill="none" stroke="#353535" stroke-width="4.1"/>
<path d="M856.5,259 C856.5,309 859.1,359 869.5,409" fill="none" stroke="url(#bg)" stroke-width="2.3"/>
<path d="M886.1,259 C886.1,309 888.7,359 899.1,409" fill="none" stroke="#353535" stroke-width="4.1"/>
<path d="M886.1,259 C886.1,309 888.7,359 899.1,409" fill="none" stroke="url(#bg)" stroke-width="2.3"/>
<path d="M915.7,259 C915.7,309 918.3,359 928.7,409" fill="none" stroke="#353535" stroke-width="4.1"/>
<path d="M915.7,259 C915.7,309 918.3,359 928.7,409" fill="none" stroke="url(#bg)" stroke-width="2.3"/>
<path d="M945.3,259 C945.3,309 947.9,359 958.3,409" fill="none" stroke="#353535" stroke-width="4.1"/>
<path d="M945.3,259 C945.3,309 947.9,359 958.3,409" fill="none" stroke="url(#bg)" stroke-width="2.3"/>
<path d="M974.8,259 C974.8,309 977.4,359 987.8,409" fill="none" stroke="#353535" stroke-width="4.1"/>
<path d="M974.8,259 C974.8,309 977.4,359 987.8,409" fill="none" stroke="url(#bg)" stroke-width="2.3"/>
<path d="M266.8,275 C266,320 267.5,370 276.5,410" fill="none" stroke="#333" stroke-width="3.2"/><path d="M266.8,275 C266,320 267.5,370 276.5,410" fill="none" stroke="#dcdcdc" stroke-width="1.4"/><path d="M266.5,275 Q276,285 279.5,296" fill="none" stroke="#2a2a2a" stroke-width="1"/>
<path d="M1001.8,266 Q1001,320 998.8,366" fill="none" stroke="#2a2a2a" stroke-width="1"/>
</g>
<path d="M260.7,284.0 L261.5,274.0 L263.6,268.4 L281.0,243.3 L281.9,242.5 L282.8,243.3 L292.2,261.0 L296.8,261.0 L307.4,243.4 L308.4,242.0 L310.2,242.0 L311.2,243.4 L321.8,261.0 L326.4,261.0 L337.0,243.4 L338.0,242.0 L339.8,242.0 L340.8,243.4 L351.4,261.0 L356.0,261.0 L366.6,243.4 L367.6,242.0 L369.4,242.0 L370.4,243.4 L380.9,261.0 L385.5,261.0 L396.1,243.4 L397.1,242.0 L398.9,242.0 L399.9,243.4 L410.5,261.0 L415.1,261.0 L425.7,243.4 L426.7,242.0 L428.5,242.0 L429.5,243.4 L440.1,261.0 L444.7,261.0 L455.3,243.4 L456.3,242.0 L458.1,242.0 L459.1,243.4 L469.7,261.0 L474.3,261.0 L484.9,243.4 L485.9,242.0 L487.7,242.0 L488.7,243.4 L499.3,261.0 L503.9,261.0 L514.5,243.4 L515.5,242.0 L517.3,242.0 L518.3,243.4 L528.8,261.0 L533.4,261.0 L544.0,243.4 L545.0,242.0 L546.8,242.0 L547.8,243.4 L558.4,261.0 L563.0,261.0 L573.6,243.4 L574.6,242.0 L576.4,242.0 L577.4,243.4 L588.0,261.0 L592.6,261.0 L603.2,243.4 L604.2,242.0 L606.0,242.0 L607.0,243.4 L617.6,261.0 L622.2,261.0 L632.8,243.4 L633.8,242.0 L635.6,242.0 L636.6,243.4 L647.2,261.0 L651.8,261.0 L662.4,243.4 L663.4,242.0 L665.2,242.0 L666.2,243.4 L676.7,261.0 L681.3,261.0 L691.9,243.4 L692.9,242.0 L694.7,242.0 L695.7,243.4 L706.3,261.0 L710.9,261.0 L721.5,243.4 L722.5,242.0 L724.3,242.0 L725.3,243.4 L735.9,261.0 L740.5,261.0 L751.1,243.4 L752.1,242.0 L753.9,242.0 L754.9,243.4 L765.5,261.0 L770.1,261.0 L780.7,243.4 L781.7,242.0 L783.5,242.0 L784.5,243.4 L795.1,261.0 L799.7,261.0 L810.3,243.4 L811.3,242.0 L813.1,242.0 L814.1,243.4 L824.6,261.0 L829.2,261.0 L839.8,243.4 L840.8,242.0 L842.6,242.0 L843.6,243.4 L854.2,261.0 L858.8,261.0 L869.4,243.4 L870.4,242.0 L872.2,242.0 L873.2,243.4 L883.8,261.0 L888.4,261.0 L899.0,243.4 L900.0,242.0 L901.8,242.0 L902.8,243.4 L913.4,261.0 L918.0,261.0 L928.6,243.4 L929.6,242.0 L931.4,242.0 L932.4,243.4 L943.0,261.0 L947.6,261.0 L958.2,243.4 L959.2,242.0 L961.0,242.0 L962.0,243.4 L972.5,261.0 L977.1,261.0 L987.7,243.4 L988.7,242.0 L990.5,242.0 L991.5,243.4 L1003.4,264.0 L1005.0,271.0 L1005.0,281.7 L999.3,366.4 L1005.9,393.3 L1003.6,428.5 L990.4,408.0 L988.8,408.0 L977.0,426.0 L975.8,427.2 L973.4,427.2 L972.2,426.0 L960.9,408.0 L959.3,408.0 L947.5,426.0 L946.3,427.2 L943.9,427.2 L942.7,426.0 L931.3,408.0 L929.7,408.0 L917.9,426.0 L916.7,427.2 L914.3,427.2 L913.1,426.0 L901.7,408.0 L900.1,408.0 L888.3,426.0 L887.1,427.2 L884.7,427.2 L883.5,426.0 L872.1,408.0 L870.5,408.0 L858.7,426.0 L857.5,427.2 L855.1,427.2 L853.9,426.0 L842.5,408.0 L840.9,408.0 L829.1,426.0 L827.9,427.2 L825.5,427.2 L824.3,426.0 L813.0,408.0 L811.4,408.0 L799.6,426.0 L798.4,427.2 L796.0,427.2 L794.8,426.0 L783.4,408.0 L781.8,408.0 L770.0,426.0 L768.8,427.2 L766.4,427.2 L765.2,426.0 L753.8,408.0 L752.2,408.0 L740.4,426.0 L739.2,427.2 L736.8,427.2 L735.6,426.0 L724.2,408.0 L722.6,408.0 L710.8,426.0 L709.6,427.2 L707.2,427.2 L706.0,426.0 L694.6,408.0 L693.0,408.0 L681.2,426.0 L680.0,427.2 L677.6,427.2 L676.4,426.0 L665.1,408.0 L663.5,408.0 L651.7,426.0 L650.5,427.2 L648.1,427.2 L646.9,426.0 L635.5,408.0 L633.9,408.0 L622.1,426.0 L620.9,427.2 L618.5,427.2 L617.3,426.0 L605.9,408.0 L604.3,408.0 L592.5,426.0 L591.3,427.2 L588.9,427.2 L587.7,426.0 L576.3,408.0 L574.7,408.0 L562.9,426.0 L561.7,427.2 L559.3,427.2 L558.1,426.0 L546.7,408.0 L545.1,408.0 L533.3,426.0 L532.1,427.2 L529.7,427.2 L528.5,426.0 L517.2,408.0 L515.6,408.0 L503.8,426.0 L502.6,427.2 L500.2,427.2 L499.0,426.0 L487.6,408.0 L486.0,408.0 L474.2,426.0 L473.0,427.2 L470.6,427.2 L469.4,426.0 L458.0,408.0 L456.4,408.0 L444.6,426.0 L443.4,427.2 L441.0,427.2 L439.8,426.0 L428.4,408.0 L426.8,408.0 L415.0,426.0 L413.8,427.2 L411.4,427.2 L410.2,426.0 L398.8,408.0 L397.2,408.0 L385.4,426.0 L384.2,427.2 L381.8,427.2 L380.6,426.0 L369.3,408.0 L367.7,408.0 L355.9,426.0 L354.7,427.2 L352.3,427.2 L351.1,426.0 L339.7,408.0 L338.1,408.0 L326.3,426.0 L325.1,427.2 L322.7,427.2 L321.5,426.0 L310.1,408.0 L308.5,408.0 L296.7,426.0 L295.5,427.2 L293.1,427.2 L291.9,426.0 L279.7,407.3 L278.5,407.5 L274.8,413.2 L273.3,413.2 L262.0,397.5 L260.8,393.0 L260.2,340.0 Z" fill="none" stroke="#1e1e1e" stroke-width="1.35" stroke-linejoin="round"/>
<defs>
<clipPath id="hc"><path d="M1038.4,179.2 L1192.4,179.4 L1209.9,195.9 Q1221,335 1209.9,476 L1191.9,494 L1038.6,494 L1021,477 Q1012.5,335 1022.5,194.3 Z"/></clipPath>
<linearGradient id="lch" x1="0" y1="179" x2="0" y2="494" gradientUnits="userSpaceOnUse"><stop offset="0" stop-color="#707070"/><stop offset="0.25" stop-color="#949494"/><stop offset="0.5" stop-color="#acacac"/><stop offset="0.75" stop-color="#969696"/><stop offset="1" stop-color="#6c6c6c"/></linearGradient>
<linearGradient id="rch" x1="0" y1="179" x2="0" y2="494" gradientUnits="userSpaceOnUse"><stop offset="0" stop-color="#808080"/><stop offset="0.25" stop-color="#b0b0b0"/><stop offset="0.5" stop-color="#c8c8c8"/><stop offset="0.75" stop-color="#aeaeae"/><stop offset="1" stop-color="#7a7a7a"/></linearGradient>
</defs>
<g clip-path="url(#hc)">
<rect x="1010" y="179" width="210" height="7" fill="#7c7c7c"/>
<rect x="1010" y="186" width="210" height="14" fill="#8f8f8f"/>
<rect x="1010" y="200" width="210" height="20" fill="#adadad"/>
<rect x="1010" y="220" width="210" height="27" fill="#c8c8c8"/>
<rect x="1010" y="247" width="210" height="31" fill="#dddddd"/>
<rect x="1010" y="278" width="210" height="33" fill="#eaeaea"/>
<rect x="1010" y="311" width="210" height="35" fill="#f1f1f1"/>
<rect x="1010" y="346" width="210" height="36" fill="#eeeeee"/>
<rect x="1010" y="382" width="210" height="33" fill="#e2e2e2"/>
<rect x="1010" y="415" width="210" height="28" fill="#d3d3d3"/>
<rect x="1010" y="443" width="210" height="23" fill="#bcbcbc"/>
<rect x="1010" y="466" width="210" height="17" fill="#9e9e9e"/>
<rect x="1010" y="483" width="210" height="12" fill="#7e7e7e"/>
<path d="M1000,170 L1038.4,170 L1038.4,179.2 Q1025,335 1038.6,494 L1038.6,500 L1000,500 Z" fill="url(#lch)"/>
<path d="M1192.4,170 L1230,170 L1230,500 L1191.9,500 L1191.9,494 Q1180,335 1192.4,179.4 Z" fill="url(#rch)"/>
<path d="M1207,196 Q1195,335 1206,477 L1230,477 L1230,196 Z" fill="#5a5a5a"/>
<ellipse cx="1208" cy="336.5" rx="5.3" ry="85" fill="#c9c9c9" stroke="#222" stroke-width="1.2"/>
<path d="M1205.5,287 L1211,300 L1205.5,309 Z M1205.5,362 L1211,374 L1205.5,384 Z" fill="#fafafa"/>
<path d="M1204.6,300 L1212,300 M1204.6,374 L1212,374" stroke="#777" stroke-width="0.8"/>
</g>
<path d="M1038.4,179.2 Q1025,335 1038.6,494" fill="none" stroke="#2a2a2a" stroke-width="1"/>
<path d="M1192.4,179.4 Q1180,335 1191.9,494" fill="none" stroke="#2a2a2a" stroke-width="1"/>
<path d="M1207,196 Q1195,335 1206,477" fill="none" stroke="#222" stroke-width="1.3"/>
<path d="M1038.4,179.2 L1192.4,179.4 L1209.9,195.9 Q1221,335 1209.9,476 L1191.9,494 L1038.6,494 L1021,477 Q1012.5,335 1022.5,194.3 Z" fill="none" stroke="#1e1e1e" stroke-width="1.4" stroke-linejoin="round"/>

<g stroke="#111" stroke-width="1.3" stroke-linejoin="round">
<path d="M328.2,456.5 L336.5,456.5 L336.5,468.9 L321.4,488.2 L314.5,476.5 Z" fill="#787878"/>
<path d="M335.8,457.6 L321.4,476.5" fill="none"/>
<path d="M338.9,468.6 L343.1,468.6 L343.1,475.8 L328.2,496.2 L321.7,488.2 Z" fill="#787878"/>
<path d="M342.4,469.6 L328.2,488.2" fill="none"/>
<path d="M308.3,488.2 L313.8,482.4 L314.5,488.2 Z" fill="#787878"/>
<rect x="308.3" y="488.2" width="6.2" height="7.9" fill="#fff"/>
<rect x="314.5" y="476.5" width="6.9" height="19.6" fill="#fff"/>
<rect x="321.7" y="488.2" width="6.5" height="7.9" fill="#fff"/>
</g>

</g></svg><!--/VP-->
<!-- red frame -->
<div class="a red" style="left:149px;top:67px;width:1419px;height:2px"></div>
<div class="a red" style="left:149px;top:794px;width:1419px;height:2px"></div>
<div class="a red" style="left:149px;top:67px;width:2px;height:729px"></div>
<div class="a red" style="left:1566px;top:67px;width:2px;height:729px"></div>
<div class="a h" style="left:145px;top:63px"></div>
<div class="a h" style="left:854px;top:63px"></div>
<div class="a h" style="left:1564px;top:63px"></div>
<div class="a h" style="left:145px;top:427px"></div>
<div class="a h" style="left:1564px;top:427px"></div>
<div class="a h" style="left:145px;top:792px"></div>
<div class="a h" style="left:854px;top:792px"></div>
<div class="a h" style="left:1564px;top:792px"></div>
<!-- dock -->

<div id="dock" class="a"></div>
<!-- gray band above dock -->
<div class="a" style="left:0;top:830px;width:1770px;height:11px;background:#4b4b4b"></div>
<div class="a" style="left:0;top:840px;width:1770px;height:1px;background:#393939"></div>
<!-- headers -->
<div class="a hdr" style="left:0;width:171px;text-align:left;padding-left:0"><span style="position:absolute;left:-9px;top:0">Szenen</span></div>
<div class="a hdr" style="left:172px;width:334px"><span style="position:absolute;left:0;width:350px;top:0">Quellen</span></div>
<div class="a hdr" style="left:507px;width:681px;padding-left:16px">Audio–Mixer</div>
<div class="a hdr" style="left:1189px;width:270px;padding-left:16px">Szenenübergänge</div>
<div class="a hdr" style="left:1460px;width:310px;padding-left:128px">Steuerung</div>
<!-- dividers -->
<div class="a" style="left:171px;top:841px;width:1px;height:175px;background:#3a3a3a"></div>
<div class="a" style="left:506px;top:841px;width:1px;height:175px;background:#3a3a3a"></div>
<div class="a" style="left:1188px;top:841px;width:1px;height:175px;background:#303030"></div>
<div class="a" style="left:1459px;top:841px;width:1px;height:175px;background:#303030"></div>
<!-- Szenen list -->
<div class="a" style="left:0;top:859px;width:170px;height:19px;background:#2c2c2c;border-top:1px solid #232323"></div>
<div class="a" style="left:0;top:995px;width:170px;height:21px;background:#3a3a3a"></div>
<!-- Quellen -->
<div class="a" style="left:173px;top:859px;width:332px;height:19px;background:#2c2c2c;border-top:1px solid #232323"></div>
<div class="a" style="left:202px;top:862px;font-size:13.3px;color:#e8e8e8;line-height:16px">Fensteraufnahme</div>
<div class="a" style="left:173px;top:995px;width:332px;height:21px;background:#3a3a3a"></div>
<!-- Szenenuebergaenge panel -->
<div class="a" style="left:1189px;top:859px;width:270px;height:157px;background:#3a3a3a"></div>
<div class="a" style="left:1193px;top:863px;width:261px;height:22px;background:#4a4a4a;border-radius:3px"></div>
<div class="a" style="left:1433px;top:864px;width:1px;height:20px;background:#3a3a3a"></div>
<div class="a" style="left:1203px;top:867px;font-size:13.4px;color:#e8e8e8;line-height:16px">Überblende</div>
<div class="a" style="left:1193px;top:915px;font-size:13.4px;color:#e8e8e8;line-height:16px">Dauer</div>
<div class="a" style="left:1234px;top:911px;width:205px;height:23px;background:#1f1f1f;border-radius:3px 0 0 3px"></div>
<div class="a" style="left:1243px;top:915px;font-size:13.4px;color:#e8e8e8;line-height:16px">350 ms</div>
<!-- Steuerung panel -->
<div class="a" style="left:1460px;top:859px;width:310px;height:157px;background:#3a3a3a"></div>
<div class="a btn" style="top:863px">Stream starten</div>
<div class="a btn" style="top:889px">Aufnahme starten</div>
<div class="a btn" style="top:915px">Wiederholungspuffer starten</div>
<div class="a btn" style="top:941px">Studio–Modus</div>
<div class="a btn" style="top:967px">Einstellungen</div>
<div class="a btn" style="top:993px">Beenden</div>
<!-- audio mixer -->
<div class="a" style="left:512px;top:865px;font-size:12.5px;color:#e8e8e8;line-height:15px">Mikrofon/AUX–Audio</div>
<div class="a" style="left:1082px;top:865px;width:100px;text-align:right;font-size:12.5px;color:#e8e8e8;line-height:15px">-4.2 dB</div>


<svg class="a" style="left:0;top:0;width:0;height:0">
<defs>
<symbol id="dk" viewBox="0 0 15 15"><g fill="none" stroke="#e2e2e2" stroke-width="1.1"><rect x="0.7" y="0.7" width="9.6" height="7.6" rx="1"/><rect x="4.7" y="5.7" width="9.6" height="8.6" rx="1" fill="#424242"/></g><rect x="0.5" y="0.5" width="10" height="2" fill="#e2e2e2"/><rect x="4.5" y="5.5" width="10" height="2" fill="#e2e2e2"/></symbol>
<symbol id="gear" viewBox="-10 -10 20 20"><path fill="currentColor" fill-rule="evenodd" d="M-1.4,-8.6 L1.4,-8.6 L1.9,-6.4 L3.4,-5.8 L5.3,-7 L7.3,-5 L6.1,-3.2 L6.6,-1.6 L8.6,-1.2 L8.6,1.6 L6.5,2 L5.9,3.4 L7.1,5.2 L5.1,7.2 L3.3,6 L1.8,6.6 L1.4,8.6 L-1.4,8.6 L-1.9,6.5 L-3.4,5.9 L-5.2,7.1 L-7.2,5.1 L-6,3.3 L-6.6,1.8 L-8.6,1.4 L-8.6,-1.4 L-6.5,-1.9 L-5.9,-3.4 L-7.1,-5.2 L-5.1,-7.2 L-3.3,-6 L-1.8,-6.6 Z M0,-3.3 A3.3,3.3 0 1,0 0.01,-3.3 Z"/></symbol>
</defs></svg>
<svg class="a" style="left:174px;top:842px;width:15px;height:15px"><use href="#dk"/></svg>
<svg class="a" style="left:508px;top:842px;width:15px;height:15px"><use href="#dk"/></svg>
<svg class="a" style="left:1191px;top:842px;width:15px;height:15px"><use href="#dk"/></svg>
<svg class="a" style="left:1461px;top:842px;width:15px;height:15px"><use href="#dk"/></svg>
<!-- window source icon -->
<svg class="a" style="left:176px;top:862px;width:14px;height:14px" viewBox="0 0 14 14"><rect x="0.6" y="0.9" width="12.8" height="11.8" fill="none" stroke="#e0e0e0" stroke-width="1.1"/><line x1="0.6" y1="3.3" x2="13.4" y2="3.3" stroke="#e0e0e0" stroke-width="1"/><circle cx="2.3" cy="2.1" r="0.5" fill="#e0e0e0"/><circle cx="3.8" cy="2.1" r="0.5" fill="#e0e0e0"/><circle cx="5.3" cy="2.1" r="0.5" fill="#e0e0e0"/></svg>
<!-- eye -->
<svg class="a" style="left:445px;top:863px;width:18px;height:12px" viewBox="0 0 18 12"><path d="M0.8,6 C4,0.2 14,0.2 17.2,6 C14,11.8 4,11.8 0.8,6 Z" fill="#e4e4e4"/><circle cx="9" cy="6" r="2.9" fill="#e4e4e4" stroke="#2b2b2b" stroke-width="1.2"/></svg>
<!-- lock -->
<svg class="a" style="left:474px;top:861px;width:14px;height:16px" viewBox="0 0 14 16"><rect x="1" y="7" width="12" height="8" fill="#8a8a8a"/><path d="M4,3.8 A3.7,3.7 0 0,1 11.2,4.5 L11.2,7.2" fill="none" stroke="#8a8a8a" stroke-width="1.6"/></svg>
<!-- quellen toolbar -->
<svg class="a" style="left:172px;top:995px;width:170px;height:21px;color:#d8d8d8" viewBox="0 0 170 21">
<g stroke="#d8d8d8" stroke-width="1.6" fill="none"><path d="M14,4.5 V19.5 M6.3,12 H21.6"/><path d="M36.2,12 H51.8"/><path d="M106,16.3 L114,8 L122,16.3"/><path d="M136.3,7.5 L144,15.8 L151.8,7.5"/></g>
<g stroke="#9a9a9a" stroke-width="1" stroke-dasharray="1,2"><line x1="93.5" y1="0" x2="93.5" y2="21"/></g>
<use href="#gear" x="65.5" y="3.5" width="17" height="17"/>
</svg>
<!-- transitions toolbar -->
<svg class="a" style="left:1380px;top:888px;width:75px;height:20px" viewBox="0 0 75 20">
<g stroke="#d8d8d8" stroke-width="1.6" fill="none"><path d="M11,3 V17 M3.8,10.3 H18.2"/></g><path d="M29.5,10.3 H44.2" stroke="#8a8a8a" stroke-width="1.6"/>
<use href="#gear" x="53.5" y="0.8" width="18" height="18" style="color:#8c8c8c"/>
</svg>
<!-- combo arrows -->
<svg class="a" style="left:1437px;top:866px;width:14px;height:16px" viewBox="0 0 14 16"><path d="M4,6 L7,3 L10,6 M4,10 L7,13 L10,10" fill="none" stroke="#d0d0d0" stroke-width="1.1"/></svg>
<!-- spin arrows -->
<div class="a" style="left:1438px;top:911px;width:16px;height:11px;background:#4a4a4a;border-radius:4px 4px 0 0"></div>
<div class="a" style="left:1438px;top:923px;width:16px;height:11px;background:#4a4a4a;border-radius:0 0 4px 4px"></div>
<svg class="a" style="left:1437px;top:911px;width:18px;height:23px" viewBox="0 0 18 23"><path d="M3,8.3 L8.5,3 L14,8.3 M3,14.5 L8.5,20 L14,14.5" fill="none" stroke="#d8d8d8" stroke-width="1.4"/></svg>
<!-- speaker & gear -->
<svg class="a" style="left:1134px;top:897px;width:26px;height:20px" viewBox="1134 897 26 20"><path d="M1135.7,902.8 H1140.2 L1147.3,898.7 V915.2 L1140.2,911.1 H1135.7 Z" fill="#d4d4d4"/><path d="M1149.6,902.5 Q1153.5,907 1149.6,911.4 M1153.2,899.3 Q1162,907 1153.2,914.9" fill="none" stroke="#d4d4d4" stroke-width="1.5"/></svg>
<svg class="a" style="left:1163px;top:898px;width:18px;height:18px;color:#d4d4d4"><use href="#gear" width="18" height="18"/></svg>
<svg class="a" style="left:507px;top:881px;width:682px;height:14px" viewBox="0 0 682 14"><rect x="5" y="0" width="194.1" height="3" fill="#4cf04c"/><rect x="199.1" y="0" width="254.6" height="3" fill="#2a7a2a"/><rect x="453.7" y="0" width="121.8" height="3" fill="#7a7a2a"/><rect x="575.5" y="0" width="100.8" height="3" fill="#8b2626"/><rect x="8.2" y="0" width="1.8" height="3" fill="#1f1f1f"/><rect x="65.1" y="0" width="2.6" height="3" fill="#000"/><rect x="556.0" y="0" width="2" height="3" fill="#f0f020"/><rect x="9.70" y="3" width="1" height="3" fill="#e0e0e0"/><rect x="20.89" y="3" width="0.8" height="1.7" fill="#c8c8c8"/><rect x="31.97" y="3" width="0.8" height="1.7" fill="#c8c8c8"/><rect x="43.06" y="3" width="0.8" height="1.7" fill="#c8c8c8"/><rect x="54.15" y="3" width="0.8" height="1.7" fill="#c8c8c8"/><rect x="65.13" y="3" width="1" height="3" fill="#e0e0e0"/><rect x="76.32" y="3" width="0.8" height="1.7" fill="#c8c8c8"/><rect x="87.41" y="3" width="0.8" height="1.7" fill="#c8c8c8"/><rect x="98.49" y="3" width="0.8" height="1.7" fill="#c8c8c8"/><rect x="109.58" y="3" width="0.8" height="1.7" fill="#c8c8c8"/><rect x="120.57" y="3" width="1" height="3" fill="#e0e0e0"/><rect x="131.75" y="3" width="0.8" height="1.7" fill="#c8c8c8"/><rect x="142.84" y="3" width="0.8" height="1.7" fill="#c8c8c8"/><rect x="153.93" y="3" width="0.8" height="1.7" fill="#c8c8c8"/><rect x="165.01" y="3" width="0.8" height="1.7" fill="#c8c8c8"/><rect x="176.00" y="3" width="1" height="3" fill="#e0e0e0"/><rect x="187.19" y="3" width="0.8" height="1.7" fill="#c8c8c8"/><rect x="198.27" y="3" width="0.8" height="1.7" fill="#c8c8c8"/><rect x="209.36" y="3" width="0.8" height="1.7" fill="#c8c8c8"/><rect x="220.45" y="3" width="0.8" height="1.7" fill="#c8c8c8"/><rect x="231.43" y="3" width="1" height="3" fill="#e0e0e0"/><rect x="242.62" y="3" width="0.8" height="1.7" fill="#c8c8c8"/><rect x="253.71" y="3" width="0.8" height="1.7" fill="#c8c8c8"/><rect x="264.79" y="3" width="0.8" height="1.7" fill="#c8c8c8"/><rect x="275.88" y="3" width="0.8" height="1.7" fill="#c8c8c8"/><rect x="286.87" y="3" width="1" height="3" fill="#e0e0e0"/><rect x="298.05" y="3" width="0.8" height="1.7" fill="#c8c8c8"/><rect x="309.14" y="3" width="0.8" height="1.7" fill="#c8c8c8"/><rect x="320.23" y="3" width="0.8" height="1.7" fill="#c8c8c8"/><rect x="331.31" y="3" width="0.8" height="1.7" fill="#c8c8c8"/><rect x="342.30" y="3" width="1" height="3" fill="#e0e0e0"/><rect x="353.49" y="3" width="0.8" height="1.7" fill="#c8c8c8"/><rect x="364.57" y="3" width="0.8" height="1.7" fill="#c8c8c8"/><rect x="375.66" y="3" width="0.8" height="1.7" fill="#c8c8c8"/><rect x="386.75" y="3" width="0.8" height="1.7" fill="#c8c8c8"/><rect x="397.73" y="3" width="1" height="3" fill="#e0e0e0"/><rect x="408.92" y="3" width="0.8" height="1.7" fill="#c8c8c8"/><rect x="420.01" y="3" width="0.8" height="1.7" fill="#c8c8c8"/><rect x="431.09" y="3" width="0.8" height="1.7" fill="#c8c8c8"/><rect x="442.18" y="3" width="0.8" height="1.7" fill="#c8c8c8"/><rect x="453.17" y="3" width="1" height="3" fill="#e0e0e0"/><rect x="464.35" y="3" width="0.8" height="1.7" fill="#c8c8c8"/><rect x="475.44" y="3" width="0.8" height="1.7" fill="#c8c8c8"/><rect x="486.53" y="3" width="0.8" height="1.7" fill="#c8c8c8"/><rect x="497.61" y="3" width="0.8" height="1.7" fill="#c8c8c8"/><rect x="508.60" y="3" width="1" height="3" fill="#e0e0e0"/><rect x="519.79" y="3" width="0.8" height="1.7" fill="#c8c8c8"/><rect x="530.87" y="3" width="0.8" height="1.7" fill="#c8c8c8"/><rect x="541.96" y="3" width="0.8" height="1.7" fill="#c8c8c8"/><rect x="553.05" y="3" width="0.8" height="1.7" fill="#c8c8c8"/><rect x="564.03" y="3" width="1" height="3" fill="#e0e0e0"/><rect x="575.22" y="3" width="0.8" height="1.7" fill="#c8c8c8"/><rect x="586.31" y="3" width="0.8" height="1.7" fill="#c8c8c8"/><rect x="597.39" y="3" width="0.8" height="1.7" fill="#c8c8c8"/><rect x="608.48" y="3" width="0.8" height="1.7" fill="#c8c8c8"/><rect x="619.47" y="3" width="1" height="3" fill="#e0e0e0"/><rect x="630.65" y="3" width="0.8" height="1.7" fill="#c8c8c8"/><rect x="641.74" y="3" width="0.8" height="1.7" fill="#c8c8c8"/><rect x="652.83" y="3" width="0.8" height="1.7" fill="#c8c8c8"/><rect x="663.91" y="3" width="0.8" height="1.7" fill="#c8c8c8"/><rect x="674.90" y="3" width="1" height="3" fill="#e0e0e0"/><text x="10.20" y="11.7" font-size="7" text-anchor="middle" fill="#e0e0e0" letter-spacing="-0.6" font-family="Liberation Sans">-60</text><text x="65.63" y="11.7" font-size="7" text-anchor="middle" fill="#e0e0e0" letter-spacing="-0.6" font-family="Liberation Sans">-55</text><text x="121.07" y="11.7" font-size="7" text-anchor="middle" fill="#e0e0e0" letter-spacing="-0.6" font-family="Liberation Sans">-50</text><text x="176.50" y="11.7" font-size="7" text-anchor="middle" fill="#e0e0e0" letter-spacing="-0.6" font-family="Liberation Sans">-45</text><text x="231.93" y="11.7" font-size="7" text-anchor="middle" fill="#e0e0e0" letter-spacing="-0.6" font-family="Liberation Sans">-40</text><text x="287.37" y="11.7" font-size="7" text-anchor="middle" fill="#e0e0e0" letter-spacing="-0.6" font-family="Liberation Sans">-35</text><text x="342.80" y="11.7" font-size="7" text-anchor="middle" fill="#e0e0e0" letter-spacing="-0.6" font-family="Liberation Sans">-30</text><text x="398.23" y="11.7" font-size="7" text-anchor="middle" fill="#e0e0e0" letter-spacing="-0.6" font-family="Liberation Sans">-25</text><text x="453.67" y="11.7" font-size="7" text-anchor="middle" fill="#e0e0e0" letter-spacing="-0.6" font-family="Liberation Sans">-20</text><text x="509.10" y="11.7" font-size="7" text-anchor="middle" fill="#e0e0e0" letter-spacing="-0.6" font-family="Liberation Sans">-15</text><text x="564.53" y="11.7" font-size="7" text-anchor="middle" fill="#e0e0e0" letter-spacing="-0.6" font-family="Liberation Sans">-10</text><text x="619.97" y="11.7" font-size="7" text-anchor="middle" fill="#e0e0e0" letter-spacing="-0.6" font-family="Liberation Sans">-5</text><text x="675.40" y="11.7" font-size="7" text-anchor="middle" fill="#e0e0e0" letter-spacing="-0.6" font-family="Liberation Sans">0</text></svg><div class="a" style="left:512px;top:905px;width:620px;height:4px;background:#4a4a4a;border-radius:2px"></div>
<div class="a" style="left:512px;top:905px;width:492px;height:4px;background:#3a87d8;border-radius:2px"></div>
<div class="a" style="left:1001px;top:902px;width:18px;height:9px;background:#d8d8d8;border-radius:2px"></div>
</body></html>
